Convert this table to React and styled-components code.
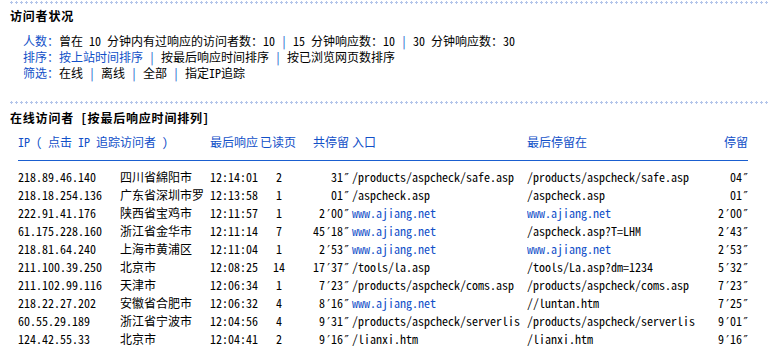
import React from "react";
import styled, { createGlobalStyle } from "styled-components";

const BLUE = "#1150c8";
const FONT = `"Noto Sans Mono CJK SC", "Noto Sans CJK SC", "Liberation Mono", monospace`;

const Global = createGlobalStyle`
  html, body { margin: 0; padding: 0; background: #fff; }
  body { font-family: ${FONT}; font-size: 12px; color: #000; }
`;

const Page = styled.div`
  width: 773px;
  height: 352px;
  overflow: hidden;
  padding-left: 10px;
  box-sizing: border-box;
`;

const Dotted = styled.div`
  height: 3px;
  margin-top: ${(p) => p.$top}px;
  margin-right: 4px;
  background-image:
    linear-gradient(to right, #b3c5ea 0 3px, transparent 3px),
    linear-gradient(to right, transparent 1px, #b3c5ea 1px 2px, transparent 2px);
  background-size: 5px 1px, 5px 3px;
  background-position: 0 1px, 0 0;
  background-repeat: repeat-x, repeat-x;
`;

const Title = styled.div`
  margin-top: ${(p) => p.$top}px;
  font-family: ${FONT};
  font-weight: 700;
  font-size: 12px;
  line-height: 16px;
  letter-spacing: 0.8px;
  white-space: pre;
`;

const Info = styled.div`
  margin-top: 9px;
  padding-left: 13px;
`;

const InfoLine = styled.div`
  line-height: 16px;
  height: 16px;
  white-space: pre;
`;

const Blue = styled.span`
  color: ${BLUE};
`;

const Sep = () => <Blue>{" | "}</Blue>;

const Table = styled.div`
  margin-top: 8px;
  margin-left: 8px;
  width: 730px;
  display: grid;
  grid-template-columns: 102px 90px 50px 38px 51px 178px 168px 53px;
`;

const HeadCell = styled.div`
  color: ${BLUE};
  line-height: 16px;
  height: 16px;
  padding-bottom: 10px;
  border-bottom: 1px solid #1a5fd0;
  white-space: pre;
  text-align: ${(p) => p.$align || "left"};
  padding-left: ${(p) => p.$pl || 0}px;
  margin-bottom: 7px;
`;

const Cell = styled.div`
  line-height: 18px;
  height: 18px;
  white-space: pre;
  overflow: hidden;
  text-align: ${(p) => p.$align || "left"};
  padding-left: ${(p) => p.$pl || 0}px;
  color: ${(p) => (p.$link ? BLUE : "#000")};
`;

const Loc = styled(Cell)`
  font-family: "Noto Sans CJK SC", sans-serif;
  font-size: 12px;
`;

const Prime = styled.span`
  font-family: "DejaVu Sans Mono", "Liberation Mono", monospace;
  font-size: 12px;
  letter-spacing: -1.2px;
`;

const rows = [
  ["218.89.46.140", "四川省綿阳市", "12:14:01", "2", "31″", "/products/aspcheck/safe.asp", "/products/aspcheck/safe.asp", "04″"],
  ["218.18.254.136", "广东省深圳市罗", "12:13:58", "1", "01″", "/aspcheck.asp", "/aspcheck.asp", "01″"],
  ["222.91.41.176", "陕西省宝鸡市", "12:11:57", "1", "2′00″", "www.ajiang.net", "www.ajiang.net", "2′00″"],
  ["61.175.228.160", "浙江省金华市", "12:11:14", "7", "45′18″", "www.ajiang.net", "/aspcheck.asp?T=LHM", "2′43″"],
  ["218.81.64.240", "上海市黄浦区", "12:11:04", "1", "2′53″", "www.ajiang.net", "www.ajiang.net", "2′53″"],
  ["211.100.39.250", "北京市", "12:08:25", "14", "17′37″", "/tools/la.asp", "/tools/La.asp?dm=1234", "5′32″"],
  ["211.102.99.116", "天津市", "12:06:34", "1", "7′23″", "/products/aspcheck/coms.asp", "/products/aspcheck/coms.asp", "7′23″"],
  ["218.22.27.202", "安徽省合肥市", "12:06:32", "4", "8′16″", "www.ajiang.net", "//luntan.htm", "7′25″"],
  ["60.55.29.189", "浙江省宁波市", "12:04:56", "4", "9′31″", "/products/aspcheck/serverlis", "/products/aspcheck/serverlis", "9′01″"],
  ["124.42.55.33", "北京市", "12:04:41", "2", "9′16″", "/lianxi.htm", "/lianxi.htm", "9′16″"],
];

const Dur = ({ v }) => {
  const parts = v.split(/([′″])/);
  return (
    <>
      {parts.map((p, i) =>
        p === "′" || p === "″" ? <Prime key={i}>{p}</Prime> : <React.Fragment key={i}>{p}</React.Fragment>
      )}
    </>
  );
};

const isLink = (s) => s.startsWith("www.");

export default function App() {
  return (
    <Page>
      <Global />
      <Dotted $top={1} />
      <Title $top={4}>访问者状况</Title>
      <Info>
        <InfoLine>
          <Blue>人数：</Blue>曾在 10 分钟内有过响应的访问者数：10<Sep />15 分钟响应数：10<Sep />30 分钟响应数：30
        </InfoLine>
        <InfoLine>
          <Blue>排序：按上站时间排序</Blue><Sep />按最后响应时间排序<Sep />按已浏览网页数排序
        </InfoLine>
        <InfoLine>
          <Blue>筛选：</Blue>在线<Sep />离线<Sep />全部<Sep />指定IP追踪
        </InfoLine>
      </Info>
      <Dotted $top={20} />
      <Title $top={6}>在线访问者 [按最后响应时间排列]</Title>
      <Table>
        <HeadCell>IP ( 点击 IP 追踪访问者 )</HeadCell>
        <HeadCell />
        <HeadCell>最后响应</HeadCell>
        <HeadCell>已读页</HeadCell>
        <HeadCell $align="right">共停留</HeadCell>
        <HeadCell $pl={3}>入口</HeadCell>
        <HeadCell>最后停留在</HeadCell>
        <HeadCell $align="right">停留</HeadCell>
        {rows.map((r) => (
          <React.Fragment key={r[0]}>
            <Cell>{r[0]}</Cell>
            <Loc>{r[1]}</Loc>
            <Cell>{r[2]}</Cell>
            <Cell $align="center">{r[3]}</Cell>
            <Cell $align="right"><Dur v={r[4]} /></Cell>
            <Cell $pl={3} $link={isLink(r[5])}>{r[5]}</Cell>
            <Cell $link={isLink(r[6])}>{r[6]}</Cell>
            <Cell $align="right"><Dur v={r[7]} /></Cell>
          </React.Fragment>
        ))}
      </Table>
    </Page>
  );
}
